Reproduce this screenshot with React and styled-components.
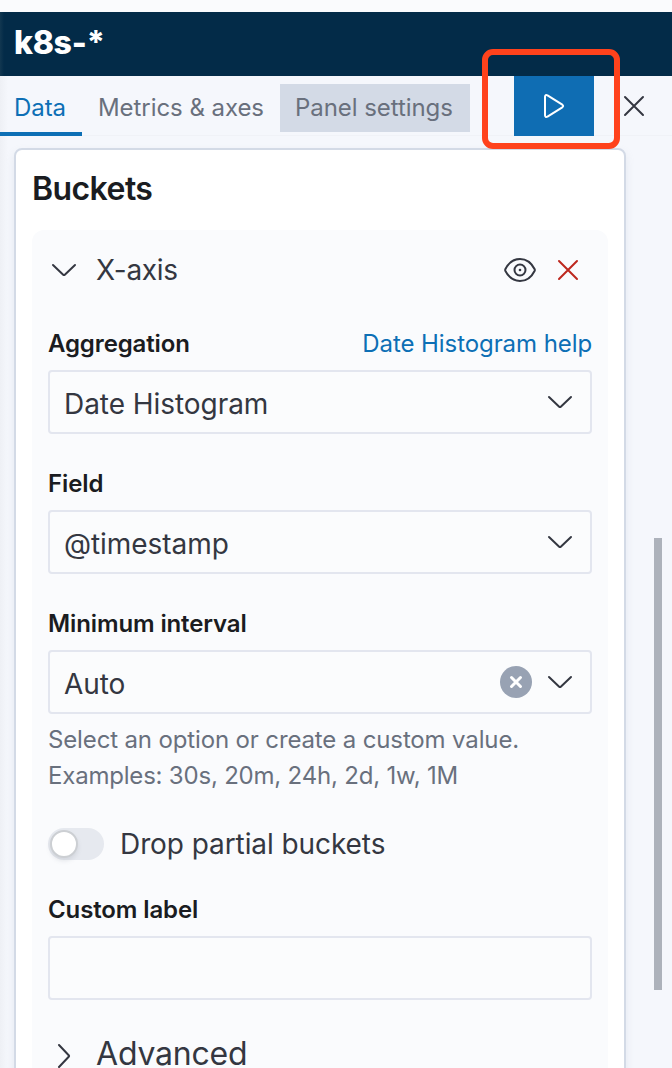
import React from 'react';
import styled, { createGlobalStyle } from 'styled-components';

const GlobalStyle = createGlobalStyle`
  * { box-sizing: border-box; }
  html, body { margin: 0; padding: 0; overflow: hidden; }
  body {
    font-family: Inter, "Liberation Sans", sans-serif;
    color: #343741;
    background: #f5f7fc;
    letter-spacing: -0.005em;
  }
  button, input { font: inherit; color: inherit; letter-spacing: inherit; }
`;

const Sidebar = styled.div`
  position: relative;
  display: flex;
  flex-direction: column;
  width: 672px;
  height: 1068px;
  overflow: hidden;
  background: linear-gradient(90deg, #eef0f5 0, #f5f7fc 8px);
`;

const TopStrip = styled.div`
  flex: none;
  height: 12px;
  background: #fafbfd;
`;

const IndexHeader = styled.header`
  flex: none;
  display: flex;
  align-items: center;
  height: 64px;
  padding: 0 14px 3px;
  background: linear-gradient(90deg, #123750 0, #032b48 4px);
  color: #fff;
  font-size: 32px;
  font-weight: 800;
  letter-spacing: -0.3px;
`;

const TabBar = styled.nav`
  flex: none;
  display: flex;
  align-items: flex-start;
  height: 60px;
  box-shadow: inset 0 -1px 0 #f0f2f7;
`;

const Tab = styled.button`
  flex: none;
  display: flex;
  width: ${(p) => p.$width}px;
  height: ${(p) => (p.$focused ? 48 : 60)}px;
  margin: ${(p) => (p.$focused ? '8px 0 0 1px' : '0')};
  padding: ${(p) => (p.$focused ? '0' : '8px 0 0')};
  padding-left: ${(p) => p.$inset}px;
  border: 0;
  box-shadow: ${(p) => (p.$active ? 'inset 0 -4px 0 #0d6fb5' : 'none')};
  background: ${(p) => (p.$focused ? '#d3dae6' : 'transparent')};
  color: ${(p) => (p.$active ? '#0d6fb5' : '#69707d')};
  font-size: 24px;
  line-height: 48px;
  letter-spacing: -0.06px;
  white-space: nowrap;
`;

const ApplyButton = styled.button`
  flex: none;
  display: flex;
  align-items: center;
  justify-content: center;
  width: 80px;
  height: 60px;
  margin-left: 44px;
  padding: 0;
  border: 0;
  background: #0f6db3;
  color: #fff;
`;

const CloseButton = styled.button`
  flex: none;
  display: flex;
  align-items: center;
  justify-content: center;
  width: 32px;
  height: 60px;
  margin-left: 24px;
  padding: 0;
  border: 0;
  background: none;
  color: #343741;
`;

const HighlightFrame = styled.div`
  position: absolute;
  left: 482px;
  top: 49px;
  width: 138px;
  height: 100px;
  border: 6px solid #ff421c;
  border-radius: 11px;
`;

const ScrollThumb = styled.div`
  position: absolute;
  left: 654px;
  top: 538px;
  width: 8px;
  height: 452px;
  background: #adb2bb;
`;

const Panel = styled.section`
  flex: none;
  width: 612px;
  height: 940px;
  margin: 12px 0 0 14px;
  padding: 18px 16px 0;
  border: 2px solid #d3dae6;
  border-radius: 8px;
  background: #fff;
  box-shadow: 0 4px 8px rgba(152, 162, 179, 0.16);
`;

const PanelTitle = styled.h2`
  margin: 0;
  height: 62px;
  color: #1a1c21;
  font-size: 32px;
  font-weight: 600;
  line-height: 42px;
  letter-spacing: -0.57px;
`;

const Bucket = styled.div`
  height: 860px;
  padding: 0 16px;
  border-radius: 12px;
  background: #fafbfd;
`;

const BucketHeader = styled.div`
  display: flex;
  align-items: center;
  height: 80px;
  margin-bottom: 16px;
  padding-right: 8px;
`;

const BucketName = styled.span`
  flex: 1;
  margin-left: 16px;
  font-size: 28px;
  letter-spacing: -0.3px;
`;

const BucketActions = styled.div`
  display: flex;
  gap: 16px;
`;

const FormRow = styled.div`
  height: ${(p) => p.$height}px;
`;

const LabelRow = styled.div`
  display: flex;
  justify-content: space-between;
  height: 44px;
  font-size: 24px;
  line-height: 35px;
`;

const Label = styled.label`
  color: #1a1c21;
  font-weight: 600;
  letter-spacing: -0.12px;
`;

const HelpLink = styled.a`
  color: #0d6fb5;
`;

const Control = styled.div`
  display: flex;
  align-items: center;
  height: 64px;
  padding: 0 14px;
  border: 2px solid #e3e6ef;
  border-radius: 4px;
  background: #fbfcfd;
  font-size: 28px;
`;

const Value = styled.span`
  flex: 1;
  padding-top: 4px;
  letter-spacing: -0.05px;
`;

const ClearButton = styled.button`
  display: flex;
  align-items: center;
  justify-content: center;
  width: 32px;
  height: 32px;
  margin-right: 12px;
  padding: 0;
  border: 0;
  border-radius: 50%;
  background: #98a2b3;
  color: #fff;
`;

const HelpText = styled.div`
  margin: 8px 0 0;
  color: #69707d;
  font-size: 24px;
  line-height: 36px;
`;

const HelpLine = styled.div`
  letter-spacing: ${(p) => p.$tracking}px;
`;

const SwitchRow = styled.div`
  display: flex;
  align-items: center;
  height: 64px;
  margin-bottom: 16px;
  gap: 16px;
  font-size: 28px;
`;

const Track = styled.span`
  display: flex;
  align-items: center;
  width: 56px;
  height: 32px;
  padding: 0 2px;
  border-radius: 16px;
  background: #e6e9ef;
`;

const Thumb = styled.span`
  width: 28px;
  height: 28px;
  border: 2px solid #cccfd3;
  border-radius: 50%;
  background: #fff;
  box-shadow: 0 3px 4px rgba(105, 112, 125, 0.15);
`;

const AdvancedRow = styled.div`
  display: flex;
  align-items: center;
  height: 64px;
  gap: 16px;
  font-size: 32px;
  letter-spacing: -0.2px;
`;

const AdvancedTitle = styled.span`
  padding-bottom: 4px;
  line-height: 28px;
`;

const Svg = styled.svg`
  flex: none;
  display: block;
  fill: none;
  stroke: currentColor;
  stroke-width: ${(p) => p.$weight || 2};
  stroke-linecap: round;
  stroke-linejoin: round;
`;

const Chevron = () => (
  <Svg width="32" height="32" viewBox="0 0 32 32">
    <path d="M5 11L15.2 20.7Q16 21.4 16.8 20.7L27 11" />
  </Svg>
);

const ChevronRight = () => (
  <Svg width="32" height="32" viewBox="0 0 32 32">
    <path d="M11 5L20.7 15.2Q21.4 16 20.7 16.8L11 27" />
  </Svg>
);

const Cross = ({ color }) => (
  <Svg width="32" height="32" viewBox="0 0 32 32" color={color}>
    <path d="M7 7L25 25M25 7L7 25" />
  </Svg>
);

const Play = () => (
  <Svg width="32" height="32" viewBox="0 0 32 32">
    <path d="M7 6.8V25.2Q7.2 27.7 9.5 26.6L24.3 17.3Q26 16 24.3 14.7L9.5 5.4Q7.2 4.3 7 6.8Z" />
  </Svg>
);

const Eye = () => (
  <Svg width="32" height="32" viewBox="0 0 32 32">
    <path d="M1.3 15.3C4.8 8.3 10 5 16 5S27.2 8.3 30.7 15.3Q31 16 30.7 16.7C27.2 23.7 22 27 16 27S4.8 23.7 1.3 16.7Q1 16 1.3 15.3Z" />
    <circle cx="16" cy="16" r="5.5" />
    <circle cx="16" cy="16" r="1.3" fill="currentColor" stroke="none" />
  </Svg>
);

const ClearIcon = () => (
  <Svg width="16" height="16" viewBox="0 0 16 16" $weight={3}>
    <path d="M3.5 3.5L12.5 12.5M12.5 3.5L3.5 12.5" />
  </Svg>
);

export default function App() {
  return (
    <>
      <GlobalStyle />
      <Sidebar>
        <TopStrip />
        <IndexHeader>k8s-*</IndexHeader>
        <TabBar>
          <Tab $active $width={82} $inset={14}>Data</Tab>
          <Tab $width={197} $inset={16}>Metrics &amp; axes</Tab>
          <Tab $focused $width={190} $inset={15}>Panel settings</Tab>
          <ApplyButton aria-label="Update"><Play /></ApplyButton>
          <CloseButton aria-label="Discard"><Cross /></CloseButton>
        </TabBar>
        <Panel>
          <PanelTitle>Buckets</PanelTitle>
          <Bucket>
            <BucketHeader>
              <Chevron />
              <BucketName>X-axis</BucketName>
              <BucketActions>
                <Eye />
                <Cross color="#bd271e" />
              </BucketActions>
            </BucketHeader>
            <FormRow $height={140}>
              <LabelRow>
                <Label>Aggregation</Label>
                <HelpLink>Date Histogram help</HelpLink>
              </LabelRow>
              <Control><Value>Date Histogram</Value><Chevron /></Control>
            </FormRow>
            <FormRow $height={140}>
              <LabelRow><Label>Field</Label></LabelRow>
              <Control><Value>@timestamp</Value><Chevron /></Control>
            </FormRow>
            <FormRow $height={206}>
              <LabelRow><Label>Minimum interval</Label></LabelRow>
              <Control>
                <Value>Auto</Value>
                <ClearButton aria-label="Clear"><ClearIcon /></ClearButton>
                <Chevron />
              </Control>
              <HelpText>
                <HelpLine $tracking={-0.14}>Select an option or create a custom value.</HelpLine>
                <HelpLine $tracking={-0.2}>Examples: 30s, 20m, 24h, 2d, 1w, 1M</HelpLine>
              </HelpText>
            </FormRow>
            <SwitchRow>
              <Track><Thumb /></Track>
              <span>Drop partial buckets</span>
            </SwitchRow>
            <FormRow $height={132}>
              <LabelRow><Label>Custom label</Label></LabelRow>
              <Control />
            </FormRow>
            <AdvancedRow><ChevronRight /><AdvancedTitle>Advanced</AdvancedTitle></AdvancedRow>
          </Bucket>
        </Panel>
        <HighlightFrame />
        <ScrollThumb />
      </Sidebar>
    </>
  );
}
